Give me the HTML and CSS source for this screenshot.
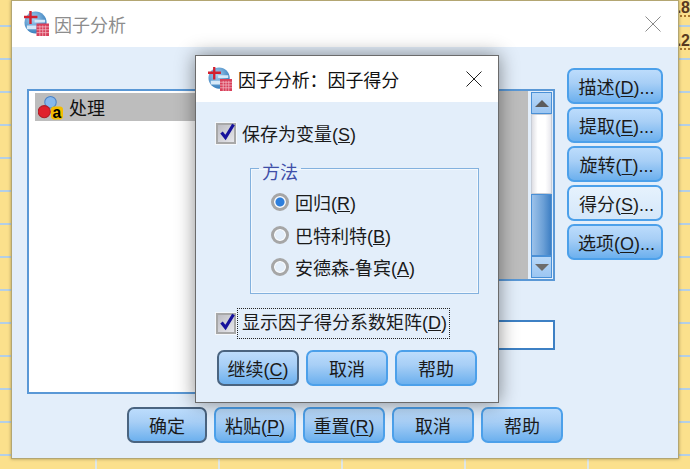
FILE: index.html
```html
<!DOCTYPE html>
<html lang="zh-CN">
<head>
<meta charset="utf-8">
<title>因子分析</title>
<link rel="stylesheet" href="styles.css">
</head>
<body>
<div class="desktop">
  <span class="cell-text cell-a">2.8</span>
  <span class="cell-text cell-b">2.2</span>

  <section class="window main-window">
    <header class="titlebar main-titlebar">
      <svg class="app-icon" viewBox="0 0 26 26"><use href="#spss"/></svg>
      <span class="main-title">因子分析</span>
      <svg class="close close-dim" viewBox="0 0 16 16"><path d="M.5.5l15 15M15.500.5l-15 15"/></svg>
    </header>
    <div class="main-body">
      <div class="work-area">
        <div class="source-list">
          <div class="var-row">
            <svg class="var-icon" viewBox="0 0 24 24">
              <circle cx="12" cy="7" r="5.500" fill="#86b8ee" stroke="#4a82c8"/>
              <circle cx="6" cy="16" r="5.800" fill="#e0202c" stroke="#b01c26"/>
              <rect x="12.500" y="11" width="11.500" height="12.500" rx="3" fill="#f4bd00"/>
              <text class="var-a" x="18.200" y="22">a</text>
            </svg>
            <span>处理</span>
          </div>
        </div>
        <div class="target-col">
          <div class="target-list">
            <div class="scrollbar">
              <div class="scroll-btn"><i class="arrow-up"></i></div>
              <div class="scroll-track"></div>
              <div class="scroll-fill"></div>
              <div class="scroll-btn"><i class="arrow-down"></i></div>
            </div>
          </div>
          <div class="text-field"></div>
        </div>
        <div class="side-buttons">
          <button class="btn side">描述(<u>D</u>)...</button>
          <button class="btn side">提取(<u>E</u>)...</button>
          <button class="btn side">旋转(<u>T</u>)...</button>
          <button class="btn side active-light">得分(<u>S</u>)...</button>
          <button class="btn side">选项(<u>O</u>)...</button>
        </div>
      </div>
      <div class="main-footer">
        <button class="btn foot default">确定</button>
        <button class="btn foot">粘贴(<u>P</u>)</button>
        <button class="btn foot">重置(<u>R</u>)</button>
        <button class="btn foot">取消</button>
        <button class="btn foot">帮助</button>
      </div>
    </div>
  </section>

  <section class="window dialog">
    <header class="titlebar dialog-titlebar">
      <svg class="app-icon small" viewBox="0 0 26 26"><use href="#spss"/></svg>
      <span class="dialog-title">因子分析：因子得分</span>
      <svg class="close" viewBox="0 0 16 16"><path d="M.5.5l15 15M15.500.5l-15 15"/></svg>
    </header>
    <div class="dialog-body">
      <label class="check-row">
        <span class="checkbox"><svg viewBox="0 0 18 18"><path d="M3.500 9.500l4 5L15.500 1.500"/></svg></span>
        <span>保存为变量(<u>S</u>)</span>
      </label>
      <fieldset class="method">
        <legend>方法</legend>
        <label class="radio-row"><span class="radio on"></span><span>回归(<u>R</u>)</span></label>
        <label class="radio-row"><span class="radio"></span><span>巴特利特(<u>B</u>)</span></label>
        <label class="radio-row"><span class="radio"></span><span>安德森-鲁宾(<u>A</u>)</span></label>
      </fieldset>
      <label class="check-row second">
        <span class="checkbox"><svg viewBox="0 0 18 18"><path d="M3.500 9.500l4 5L15.500 1.500"/></svg></span>
        <span class="focus-label">显示因子得分系数矩阵(<u>D</u>)</span>
      </label>
      <div class="dialog-footer">
        <button class="btn dlg default">继续(<u>C</u>)</button>
        <button class="btn dlg">取消</button>
        <button class="btn dlg">帮助</button>
      </div>
    </div>
  </section>

  <svg class="defs" width="0" height="0">
    <defs>
      <radialGradient id="globe" cx="40%" cy="35%" r="70%">
        <stop offset="0" stop-color="#a9d2f2"/>
        <stop offset="1" stop-color="#2f78b8"/>
      </radialGradient>
      <g id="spss">
        <circle cx="12" cy="12" r="11.500" fill="url(#globe)"/>
        <path d="M11 9h11v3H11zM3 15h10v4H3z" fill="#d7e9f8"/>
        <path d="M5.500 0h2.500v5h6v2.500H8v6H5.500v-6H0V5h5.500z" fill="#d3202f"/>
        <rect x="13" y="13" width="13" height="13" fill="#d8405a"/>
        <path d="M13 16.500h13M13 19.500h13M13 22.500h13M16.500 15v11M19.500 15v11M22.500 15v11" stroke="#f3b8c4" stroke-width=".8"/>
      </g>
    </defs>
  </svg>
</div>
</body>
</html>
```
FILE: styles.css
```css
* { box-sizing: border-box; }
html, body { margin: 0; padding: 0; }
body {
  width: 690px;
  height: 469px;
  overflow: hidden;
  font-family: "Liberation Sans", "Noto Sans CJK SC", sans-serif;
  font-size: 18px;
  color: #1a1a1a;
}
.desktop {
  position: relative;
  width: 690px;
  height: 469px;
  overflow: hidden;
  background-color: #fbe08c;
  background-image:
    repeating-linear-gradient(to bottom, transparent 0 25px, #b4cfe6 25px 27px, transparent 27px 33px),
    repeating-linear-gradient(to right, transparent 0 95px, #dfe6e4 95px 97px, transparent 97px 123px);
}
.cell-text {
  position: absolute;
  right: 0;
  height: 16px;
  font-size: 16px;
  line-height: 14px;
  color: #5a3a20;
  font-weight: 700;
  border-bottom: 2px dotted #a8742c;
}
.cell-a { top: 1px; }
.cell-b { top: 34px; }

.window {
  position: absolute;
  display: flex;
  flex-direction: column;
  background: #e3eefa;
}
.main-window {
  left: 11px;
  top: 0;
  width: 668px;
  height: 459px;
  border: 1px solid #b3a672;
  box-shadow: 0 0 3px rgba(90, 80, 40, .5);
}
.dialog {
  left: 195px;
  top: 55px;
  width: 304px;
  height: 348px;
  border: 1px solid #6b6b6b;
  box-shadow: 0 0 18px rgba(0, 0, 0, .45);
}
.titlebar {
  display: flex;
  align-items: center;
  flex: none;
  background: #fff;
}
.main-titlebar { height: 46px; padding: 0 17px 1px 12px; }
.dialog-titlebar { height: 46px; padding: 0 16px 0 12px; }
.app-icon { width: 25px; height: 25px; flex: none; }
.app-icon.small { width: 24px; height: 24px; }
.main-title { margin-left: 5px; font-size: 18px; color: #8d8d8d; flex: 1; }
.dialog-title { margin-left: 6px; font-size: 18px; color: #111; flex: 1; white-space: nowrap; letter-spacing: -.1px; }
.close { width: 16px; height: 16px; flex: none; fill: none; stroke: #222; stroke-width: 1; }
.close-dim { stroke: #8a8a8a; }

.main-body {
  flex: 1;
  display: flex;
  flex-direction: column;
  padding: 21px 15px 15px 15px;
}
.work-area { display: flex; flex: 1; min-height: 0; }
.source-list {
  width: 260px;
  height: 305px;
  margin-top: 21px;
  border: 2px solid #5a98d6;
  border-right: 0;
  background: #fff;
  padding: 2px 0 0 6px;
}
.var-row {
  display: flex;
  align-items: center;
  height: 28px;
  background: #bdbdbd;
  color: #111;
}
.var-icon { width: 25px; height: 25px; margin: 0 6px 0 3px; flex: none; }
.var-a { font: 700 15px "Liberation Sans", sans-serif; text-anchor: middle; fill: #000; }
.target-col {
  width: 269px;
  margin-top: 21px;
  display: flex;
  flex-direction: column;
}
.target-list {
  height: 192px;
  display: flex;
  justify-content: flex-end;
  border: 2px solid #5a98d6;
  background: #bdbdbd;
}
.scrollbar {
  width: 25px;
  padding: 1px 1px 1px 1px;
  display: flex;
  flex-direction: column;
  background: #e3eefa;
  border-left: 2px solid #e3eefa;
}
.scroll-btn {
  height: 22px;
  flex: none;
  display: flex;
  align-items: center;
  justify-content: center;
  background: linear-gradient(#b8d8f8, #9cc6f2);
  border: 1px solid #4a90d6;
}
.arrow-up, .arrow-down {
  width: 0;
  height: 0;
  border-left: 7px solid transparent;
  border-right: 7px solid transparent;
}
.arrow-up { border-bottom: 7px solid #5c5c5c; }
.arrow-down { border-top: 7px solid #6c6c6c; }
.scroll-track {
  height: 80px;
  flex: none;
  background: linear-gradient(to right, #dfdfe4, #fff 30%, #fff 70%, #e8e8ee);
  border: 1px solid #c8cdd6;
}
.scroll-fill {
  flex: 1;
  background: linear-gradient(to right, #9cc2ea, #6a9fd6 60%, #3e7fc4);
  border: 1px solid #4a90d6;
}
.text-field {
  height: 30px;
  margin-top: 39px;
  border: 2px solid #3d80c4;
  background: #fff;
}
.side-buttons {
  display: flex;
  flex-direction: column;
  gap: 3px;
  margin-left: 12px;
  width: 96px;
}
.btn {
  font: inherit;
  color: #1a1a1a;
  padding: 0;
  height: 36px;
  border: 2px solid #4ca0ea;
  border-radius: 7px;
  background: linear-gradient(#bcdcfc, #a8cff6 40%, #6cb0ee);
  white-space: nowrap;
}
.btn.side { padding-left: 3px; }
.btn.active-light { background: linear-gradient(#e6f2fd, #d4e7fa); }
.btn.default { border-color: #4a6480; }
.btn u { text-underline-offset: 2px; }
.main-footer {
  display: flex;
  gap: 7px;
  flex: none;
  margin-left: 100px;
}
.foot { width: 82px; }
.foot.default { width: 80px; }

.dialog-body {
  flex: 1;
  display: flex;
  flex-direction: column;
  padding: 20px 20px 0 20px;
}
.check-row {
  display: flex;
  align-items: center;
  gap: 6px;
  height: 22px;
  flex: none;
}
.checkbox {
  width: 20px;
  height: 21px;
  flex: none;
  border: 2px solid #a8a8a8;
  background: linear-gradient(135deg, #bdbdc4, #e6e6ea);
  box-shadow: 0 0 0 1px #f4f7fb;
  display: flex;
  align-items: center;
  justify-content: center;
}
.checkbox svg {
  width: 18px;
  height: 18px;
  fill: none;
  stroke: #17129c;
  stroke-width: 3.200;
  margin-top: -3px;
  margin-left: 2px;
  overflow: visible;
}
.method {
  margin: 10px 0 0 34px;
  width: 229px;
  height: 140px;
  padding: 4px 0 0 20px;
  border: 1px solid #83b1de;
  box-shadow: 0 0 0 1px #f3f8fd inset;
  min-inline-size: 0;
}
.method legend {
  padding: 10px 3px 0;
  margin-left: -12px;
  color: #3f4fa8;
  font-size: 18px;
  line-height: 18px;
}
.radio-row {
  display: flex;
  align-items: center;
  gap: 6px;
  height: 32.500px;
}
.radio {
  width: 18px;
  height: 18px;
  flex: none;
  border-radius: 50%;
  border: 3px solid #a6a6a6;
  background: #e4effb;
  box-shadow: inset 0 0 0 1px #fff;
}
.radio.on { background: radial-gradient(circle, #2e7fdc 0 4px, #dbe8f7 5px); }
.check-row.second { margin-top: 18px; }
.focus-label {
  outline: 1px dotted #222;
  outline-offset: 0;
  margin-left: -4px;
  padding: 3px 1px 3px 4px;
  line-height: 23px;
  width: 211px;
  white-space: nowrap;
}
.dialog-footer {
  display: flex;
  gap: 7px;
  margin: 16px 0 0 1px;
}
.dlg { width: 82px; }
.defs { position: absolute; }
```
